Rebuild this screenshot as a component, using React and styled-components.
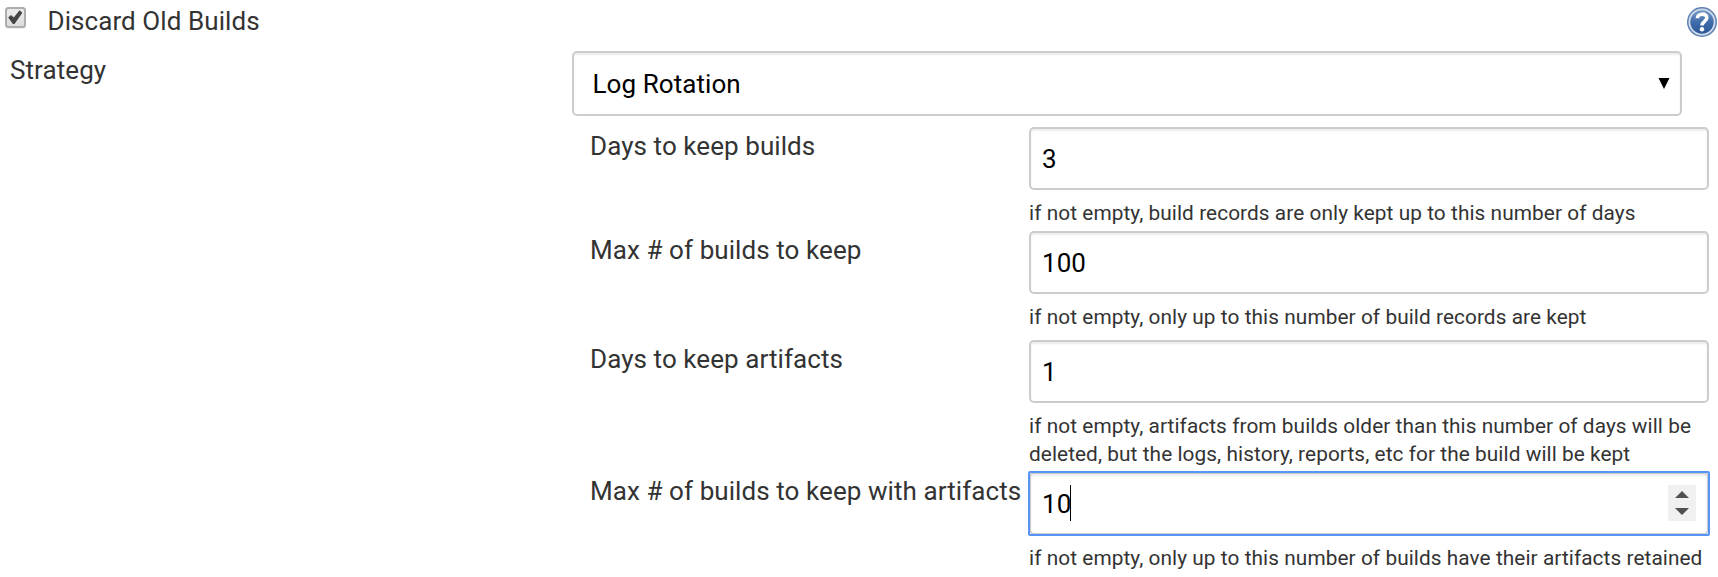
import React from "react";
import styled, { createGlobalStyle, css } from "styled-components";

const GlobalStyle = createGlobalStyle`
  *, *::before, *::after { box-sizing: border-box; }
  html, body { margin: 0; background: #fff; overflow: hidden; }
  body { font-family: Roboto, sans-serif; color: #333; letter-spacing: 0.075px; }
`;

const Page = styled.main`
  width: 1718px;
  height: 577px;
  overflow: hidden;
`;

const Header = styled.header`
  display: flex;
  align-items: flex-start;
  height: 51px;
  padding-left: 5px;
`;

const CheckIcon = styled.svg`
  flex: none;
  width: 22px;
  height: 24px;
  margin-top: 6px;
`;

const Label = styled.span`
  font-size: 26px;
  line-height: 34px;
  white-space: nowrap;
`;

const Title = styled(Label)`
  flex: 1;
  margin: 4px 0 0 20.5px;
`;

const HelpIcon = styled.svg`
  flex: none;
  width: 31px;
  height: 31px;
  margin-top: 7px;
`;

const Body = styled.section`
  display: grid;
  grid-template-columns: 572px 1fr;
`;

const StrategyLabel = styled(Label)`
  padding: 2px 0 0 10px;
`;

const control = css`
  border: 2px solid #ccc;
  border-radius: 5px;
  background: #fff;
  box-shadow: inset 0 2px 2px rgba(0, 0, 0, 0.075);
  color: #000;
  font-family: inherit;
  font-size: 26px;
  letter-spacing: inherit;
`;

const Select = styled.div`
  ${control}
  display: flex;
  align-items: center;
  justify-content: space-between;
  width: 1110px;
  height: 65px;
  padding: 0 10px 0 18.5px;
`;

const Arrow = styled.svg`
  width: 12px;
  height: 11px;
  margin-top: -1px;
`;

const Rows = styled.div`
  display: flex;
  flex-direction: column;
  padding: 11px 0 0 18px;
`;

const Row = styled.div`
  display: grid;
  grid-template-columns: 439px 680px;
  height: ${(p) => p.$height}px;
`;

const RowLabel = styled(Label)`
  padding-top: 2px;
`;

const Field = styled.div`
  position: relative;
  height: 63px;
`;

const Input = styled.input`
  ${control}
  display: block;
  width: 100%;
  height: 63px;
  padding: 1px 11px 0;
  outline: none;
`;

const FocusRing = styled.span`
  position: absolute;
  inset: -1px;
  border: 2px solid #5694f8;
  border-radius: 2px;
  pointer-events: none;
`;

const Caret = styled.span`
  position: absolute;
  left: 41px;
  top: 13px;
  width: 1px;
  height: 36px;
  background: #000;
`;

const Spinner = styled.svg`
  position: absolute;
  right: 13px;
  top: 13px;
  width: 28px;
  height: 36px;
`;

const Hint = styled.p`
  margin: 9px -9px 0 0;
  font-size: 20.8px;
  line-height: 28px;
  white-space: nowrap;
`;

const rows = [
  { label: "Days to keep builds", value: "3", height: 104, hint: ["if not empty, build records are only kept up to this number of days"] },
  { label: "Max # of builds to keep", value: "100", height: 109, hint: ["if not empty, only up to this number of build records are kept"] },
  {
    label: "Days to keep artifacts",
    value: "1",
    height: 132,
    hint: [
      "if not empty, artifacts from builds older than this number of days will be",
      "deleted, but the logs, history, reports, etc for the build will be kept",
    ],
  },
  {
    label: "Max # of builds to keep with artifacts",
    value: "10",
    height: 104,
    focused: true,
    hint: ["if not empty, only up to this number of builds have their artifacts retained"],
  },
];

function Checkbox() {
  return (
    <CheckIcon viewBox="0 0 22 24" role="img" aria-label="checked">
      <defs>
        <linearGradient id="box" x1="0" y1="0" x2="0" y2="1">
          <stop offset="0" stopColor="#ededed" />
          <stop offset="1" stopColor="#dcdcdc" />
        </linearGradient>
      </defs>
      <rect x="0" y="3" width="21" height="20" rx="3" fill="#f0f0f0" />
      <rect x="1" y="2" width="19" height="19" rx="2.5" fill="url(#box)" stroke="#adadad" strokeWidth="2" />
      <path d="M3.2 11.6L6 8.9L8.8 11.6L14.6 4.2L17.4 6.8L9.5 18H7.9Z" fill="#444" />
    </CheckIcon>
  );
}

function Help() {
  return (
    <HelpIcon viewBox="0 0 31 31" role="img" aria-label="help">
      <defs>
        <linearGradient id="help" x1="0" y1="0" x2="0" y2="1">
          <stop offset="0" stopColor="#7f9fcb" />
          <stop offset="0.5" stopColor="#3f6cab" />
          <stop offset="1" stopColor="#2c5796" />
        </linearGradient>
      </defs>
      <circle cx="15" cy="15" r="15" fill="#5e81b5" />
      <circle cx="15" cy="15" r="12.6" fill="url(#help)" stroke="#d0dcec" strokeWidth="1.8" />
      <path
        d="M10.4 11.2C10.4 5.9 19.8 5.9 19.8 10.8C19.8 14.5 15 14.3 15 18.6"
        fill="none"
        stroke="#fff"
        strokeWidth="3.6"
      />
      <circle cx="15" cy="22.3" r="2.2" fill="#fff" />
    </HelpIcon>
  );
}

export default function App() {
  return (
    <Page>
      <GlobalStyle />
      <Header>
        <Checkbox />
        <Title>Discard Old Builds</Title>
        <Help />
      </Header>
      <Body>
        <StrategyLabel>Strategy</StrategyLabel>
        <div>
          <Select>
            Log Rotation
            <Arrow viewBox="0 0 12 11">
              <path d="M0.5 0H11.5L6 11Z" fill="#000" />
            </Arrow>
          </Select>
          <Rows>
            {rows.map((row) => (
              <Row key={row.label} $height={row.height}>
                <RowLabel>{row.label}</RowLabel>
                <div>
                  <Field>
                    <Input defaultValue={row.value} aria-label={row.label} />
                    {row.focused && (
                      <>
                        <FocusRing />
                        <Caret />
                        <Spinner viewBox="0 0 28 36">
                          <rect width="28" height="36" fill="#f0f0f0" />
                          <path d="M7 13L14 6L21 13ZM7 23L14 30L21 23Z" fill="#505050" />
                        </Spinner>
                      </>
                    )}
                  </Field>
                  <Hint>
                    {row.hint.map((line, i) => (
                      <React.Fragment key={line}>
                        {i > 0 && <br />}
                        {line}
                      </React.Fragment>
                    ))}
                  </Hint>
                </div>
              </Row>
            ))}
          </Rows>
        </div>
      </Body>
    </Page>
  );
}
